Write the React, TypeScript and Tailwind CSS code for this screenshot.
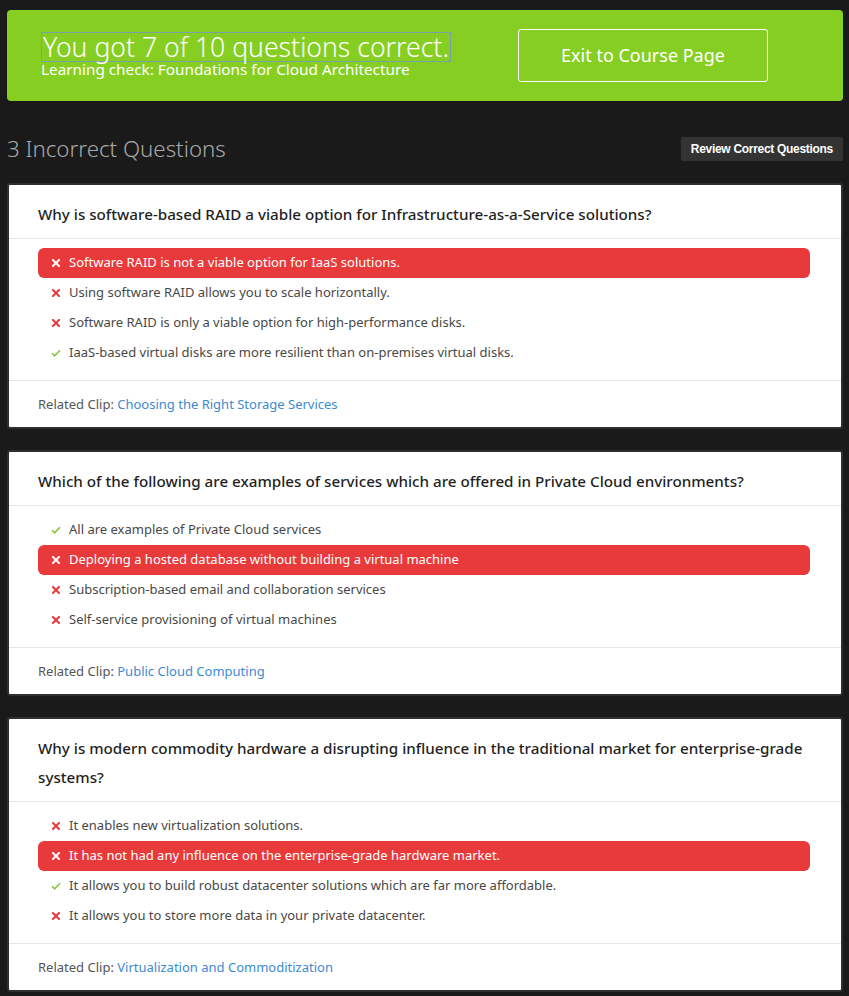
const questions = [
  {
    text: "Why is software-based RAID a viable option for Infrastructure-as-a-Service solutions?",
    options: [
      { text: "Software RAID is not a viable option for IaaS solutions.", correct: false, chosen: true },
      { text: "Using software RAID allows you to scale horizontally.", correct: false },
      { text: "Software RAID is only a viable option for high-performance disks.", correct: false },
      { text: "IaaS-based virtual disks are more resilient than on-premises virtual disks.", correct: true },
    ],
    clip: "Choosing the Right Storage Services",
  },
  {
    text: "Which of the following are examples of services which are offered in Private Cloud environments?",
    options: [
      { text: "All are examples of Private Cloud services", correct: true },
      { text: "Deploying a hosted database without building a virtual machine", correct: false, chosen: true },
      { text: "Subscription-based email and collaboration services", correct: false },
      { text: "Self-service provisioning of virtual machines", correct: false },
    ],
    clip: "Public Cloud Computing",
  },
  {
    text: "Why is modern commodity hardware a disrupting influence in the traditional market for enterprise-grade systems?",
    options: [
      { text: "It enables new virtualization solutions.", correct: false },
      { text: "It has not had any influence on the enterprise-grade hardware market.", correct: false, chosen: true },
      { text: "It allows you to build robust datacenter solutions which are far more affordable.", correct: true },
      { text: "It allows you to store more data in your private datacenter.", correct: false },
    ],
    clip: "Virtualization and Commoditization",
  },
];

function Cross({ white }: { white?: boolean }) {
  return (
    <svg width="8" height="8" viewBox="0 0 8 8" className={white ? "text-white" : "text-[#e5393b]"}>
      <path d="M1 1L7 7M7 1L1 7" stroke="currentColor" strokeWidth="2" strokeLinecap="square" />
    </svg>
  );
}

function Check() {
  return (
    <svg width="10" height="8" viewBox="0 0 10 8" className="text-[#86c540]">
      <path d="M1 4.2L3.6 6.8L9 1.2" stroke="currentColor" strokeWidth="1.6" fill="none" />
    </svg>
  );
}

export default function App() {
  return (
    <div
      className="min-h-[996px] bg-[#1a1a1a] pl-[7px] pr-[6px] pt-[10px] pb-[6px]"
      style={{ fontFamily: '"Noto Sans", "Open Sans", sans-serif' }}
    >
      {/* Score banner */}
      <div className="flex h-[91px] items-center rounded-[4px] bg-[#86cf22] pl-[34px]">
        <div className="w-[477px] pb-[2px]">
          <h1 className="inline-block border border-[#7aa0a8] px-px text-[26.6px] font-light leading-[28px] text-white">
            You got 7 of 10 questions correct.
          </h1>
          <p className="-mt-[2px] text-[15.3px] leading-[17px] text-white">
            Learning check: Foundations for Cloud Architecture
          </p>
        </div>
        <button className="flex h-[53px] w-[250px] items-center justify-center rounded-[3px] border border-white text-[18px] text-white">
          Exit to Course Page
        </button>
      </div>

      {/* Section header */}
      <div className="mt-[36px] mb-[22px] flex h-[24px] items-center justify-between">
        <h2 className="text-[22.3px] font-light text-[#a9a9a9]">3 Incorrect Questions</h2>
        <button
          className="h-[24px] rounded-[2px] bg-[#333333] px-[10px] text-[12px] font-bold tracking-[-0.3px] text-white"
          style={{ fontFamily: '"Liberation Sans", Arial, sans-serif' }}
        >
          Review Correct Questions
        </button>
      </div>

      <div className="flex flex-col gap-[21px]">
        {questions.map((q) => (
          <div key={q.clip} className="rounded-[3px] border-2 border-[#2f2f2f] bg-white">
            <div className="border-b border-[#e6e6e6] px-[29px] pt-[15px] pb-[9px] text-[15.2px] font-medium leading-[29px] text-[#1f1f1f]">
              {q.text}
            </div>
            <div className="border-b border-[#e6e6e6] pl-[29px] pr-[31px] pt-[9px] pb-[12px]">
              {q.options.map((o) => (
                <div
                  key={o.text}
                  className={`flex h-[30px] items-center gap-[8px] pl-[13px] text-[13px] ${
                    o.chosen ? "rounded-[6px] bg-[#e8393b] text-white" : "text-[#484848]"
                  }`}
                >
                  <span className="flex w-[10px] justify-center">
                    {o.correct ? <Check /> : <Cross white={o.chosen} />}
                  </span>
                  {o.text}
                </div>
              ))}
            </div>
            <div className="px-[29px] pt-[15px] pb-[14px] text-[13px] leading-[17px] text-[#555]">
              Related Clip: <a className="text-[#3d8ad0]">{q.clip}</a>
            </div>
          </div>
        ))}
      </div>
    </div>
  );
}
